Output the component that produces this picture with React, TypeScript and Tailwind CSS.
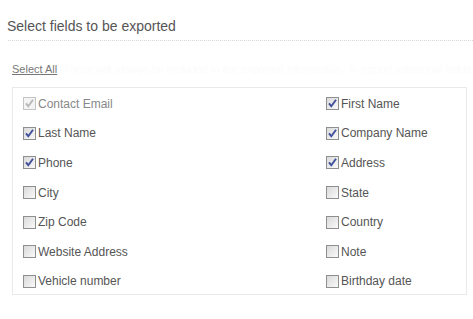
const fields: { label: string; checked: boolean; disabled?: boolean }[] = [
  { label: 'Contact Email', checked: true, disabled: true },
  { label: 'First Name', checked: true },
  { label: 'Last Name', checked: true },
  { label: 'Company Name', checked: true },
  { label: 'Phone', checked: true },
  { label: 'Address', checked: true },
  { label: 'City', checked: false },
  { label: 'State', checked: false },
  { label: 'Zip Code', checked: false },
  { label: 'Country', checked: false },
  { label: 'Website Address', checked: false },
  { label: 'Note', checked: false },
  { label: 'Vehicle number', checked: false },
  { label: 'Birthday date', checked: false },
];

function Box({ checked, disabled }: { checked: boolean; disabled?: boolean }) {
  return (
    <svg width="13" height="13" viewBox="0 0 13 13" className="shrink-0">
      <defs>
        <linearGradient id="cbg" x1="0" y1="0" x2="1" y2="1">
          <stop offset="0" stopColor="#d8d8d8" />
          <stop offset="1" stopColor="#fbfbfb" />
        </linearGradient>
      </defs>
      <rect x="0.5" y="0.5" width="12" height="12" fill={disabled ? '#f4f4f4' : 'url(#cbg)'} stroke={disabled ? '#c4c4c4' : '#8e8f8f'} />
      {checked && (
        <path d="M3 6.3 L5.3 9.2 L10 2.8" fill="none" stroke={disabled ? '#b8b8b8' : '#3f4f9a'} strokeWidth="1.9" />
      )}
    </svg>
  );
}

export default function App() {
  return (
    <div className="h-[319px] w-[473px] bg-white font-['Liberation_Sans',Arial,sans-serif]">
      <div className="pl-[7px] pt-[18px]">
        <h2 className="text-[14px] leading-[17px] text-[#555]">Select fields to be exported</h2>
        <div className="mt-[5px] ml-px border-b border-dotted border-[#d6d6d6]" />
      </div>
      <div className="mt-[22px] flex items-baseline pl-[12px] text-[11px] leading-[13px]">
        <a className="text-[#777] underline">Select All</a>
        <span className="ml-[2px] whitespace-nowrap text-[#fcfcfc]">(These will always be included in the exported information. To export additional fields</span>
      </div>
      <div className="ml-[12px] mt-[11px] h-[208px] w-[455px] border border-[#e9e9e9]">
        <div className="grid grid-cols-[303px_1fr] pl-[10px] pt-px">
          {fields.map((f) => (
            <label key={f.label} className="flex h-[29.6px] items-center gap-[2px] text-[12px]">
              <Box checked={f.checked} disabled={f.disabled} />
              <span className={f.disabled ? 'text-[#888]' : 'text-[#555]'}>{f.label}</span>
            </label>
          ))}
        </div>
      </div>
    </div>
  );
}
